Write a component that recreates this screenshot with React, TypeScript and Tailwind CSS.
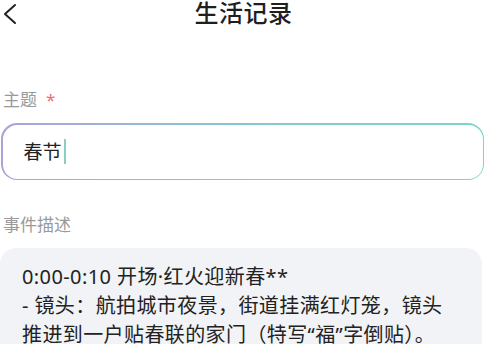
const FONT = { fontFamily: '"Noto Sans", "Noto Sans CJK SC", sans-serif' };

export default function App() {
  return (
    <div className="w-[487px] h-[344px] overflow-hidden bg-white text-[#222]" style={FONT}>
      {/* header */}
      <div className="relative h-[28px] flex items-start justify-center">
        <svg
          className="absolute left-[3px] top-[3px]"
          width="14"
          height="22"
          viewBox="0 0 14 22"
          fill="none"
          stroke="#222"
          strokeWidth="2"
          strokeLinecap="round"
          strokeLinejoin="round"
        >
          <polyline points="12,2 2,11 12,20" />
        </svg>
        <h1
          className="-mt-[3px] text-[24px] leading-[30px] font-medium text-[#1f1f1f] tracking-[0.5px]"
          style={{ fontFamily: '"Noto Sans CJK SC", sans-serif' }}
        >
          生活记录
        </h1>
      </div>

      <div className="pl-[1px] pr-[3px]">
        {/* subject */}
        <div className="mt-[62px] mb-[13px] pl-[2px] text-[17px] leading-[20px] text-[#9a9a9a]">
          主题<span className="ml-[9px] text-[#ef6b6b]">*</span>
        </div>
        <div className="rounded-[16px] p-[1.5px] bg-linear-to-r from-[#aaa3d9] via-[#86c6d3] to-[#7cd4cc]">
          <div className="h-[54px] rounded-[14.5px] bg-white flex items-center pl-[21px]">
            <span className="text-[19px] leading-[24px] text-[#222]">春节</span>
            <span className="ml-[2px] w-[2px] h-[25px] bg-[#8ccfc2]" />
          </div>
        </div>

        {/* description */}
        <div className="mt-[35px] mb-[13px] pl-[2px] text-[17px] leading-[20px] text-[#9a9a9a]">事件描述</div>
        <div className="-ml-[1px] w-[482px] rounded-[16px] bg-[#f1f3f6] pl-[22px] pr-[12px] pt-[14px] pb-[16px] text-[20px] leading-[29px] tracking-[0.4px] text-[#222]">
          <p>0:00-0:10 开场·红火迎新春**</p>
          <p>- 镜头：航拍城市夜景，街道挂满红灯笼，镜头</p>
          <p>推进到一户贴春联的家门（特写“福”字倒贴）。</p>
        </div>
      </div>
    </div>
  );
}
